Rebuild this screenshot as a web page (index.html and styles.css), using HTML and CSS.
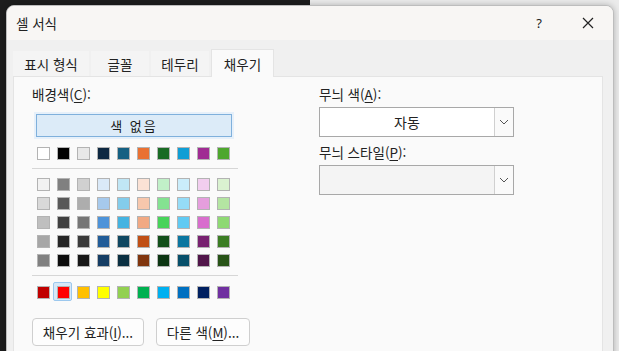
FILE: index.html
```html
<!DOCTYPE html>
<html lang="ko">
<head>
  <meta charset="utf-8"/>
  <title>셀 서식</title>
  <link rel="stylesheet" href="styles.css">
</head>
<body>
  <div class="dialog">
    <div class="titlebar">
      <span class="title">셀 서식</span>
      <span class="title-btns">
        <span class="help">?</span>
        <svg class="close" width="12" height="12" viewBox="0 0 12 12"><path d="M1 1 L11 11 M11 1 L1 11" stroke="#222" stroke-width="1.2" fill="none"/></svg>
      </span>
    </div>
    <div class="dialog-body">
      <div class="tabs">
        <div class="tab t1">표시 형식</div>
        <div class="tab t2">글꼴</div>
        <div class="tab t3">테두리</div>
        <div class="tab active">채우기</div>
      </div>
      <div class="panel">
        <div class="col-left">
          <div class="label">배경색(<u>C</u>):</div>
          <div class="no-color">색 없음</div>
          <div class="swatches" id="base-row"></div>
          <div class="sep"></div>
          <div class="grid" id="theme-grid"></div>
          <div class="sep"></div>
          <div class="swatches" id="std-row"></div>
          <div class="btn-row">
            <div class="btn b1">채우기 효과(<u>I</u>)...</div>
            <div class="btn b2">다른 색(<u>M</u>)...</div>
          </div>
        </div>
        <div class="col-right">
          <div class="label">무늬 색(<u>A</u>):</div>
          <div class="combo">
            <span class="combo-text">자동</span>
            <span class="combo-arrow"><svg width="10" height="6" viewBox="0 0 10 6"><path d="M1 1 L5 5 L9 1" stroke="#555" stroke-width="1" fill="none"/></svg></span>
          </div>
          <div class="label lbl2">무늬 스타일(<u>P</u>):</div>
          <div class="combo empty">
            <span class="combo-text"></span>
            <span class="combo-arrow"><svg width="10" height="6" viewBox="0 0 10 6"><path d="M1 1 L5 5 L9 1" stroke="#555" stroke-width="1" fill="none"/></svg></span>
          </div>
        </div>
      </div>
    </div>
  </div>
<script>
  const base = ["#FFFFFF", "#000000", "#E8E8E8", "#0E2841", "#156082", "#E97132", "#196B24", "#0F9ED5", "#A02B93", "#4EA72E"];
  const theme = [
    ["#F2F2F2", "#808080", "#D0D0D0", "#DAE9F8", "#C0E6F5", "#FBE2D5", "#C1F0C8", "#CAEDFB", "#F2CEEF", "#DAF2D0"],
    ["#D9D9D9", "#595959", "#ADADAD", "#A6C9EC", "#83CCEB", "#F7C7AC", "#84E291", "#95DCF7", "#E59EDD", "#B4E5A2"],
    ["#BFBFBF", "#404040", "#757575", "#4D93D9", "#44B3E1", "#F1A983", "#47D359", "#60CAF3", "#D86DCD", "#8ED973"],
    ["#A6A6A6", "#262626", "#3A3A3A", "#215C98", "#0F4761", "#C04F15", "#124F1A", "#0B76A0", "#782170", "#3B7D23"],
    ["#808080", "#0D0D0D", "#171717", "#153D64", "#0A2F41", "#80350E", "#0C3512", "#074F6A", "#501549", "#275317"]
  ];
  const std = ["#C00000", "#FF0000", "#FFC000", "#FFFF00", "#92D050", "#00B050", "#00B0F0", "#0070C0", "#002060", "#7030A0"];

  function makeSwatch(color, selected) {
    const cell = document.createElement("div");
    cell.className = selected ? "cell selected" : "cell";
    const sw = document.createElement("div");
    sw.className = "swatch";
    sw.style.background = color;
    cell.appendChild(sw);
    return cell;
  }

  base.forEach(c => document.getElementById("base-row").appendChild(makeSwatch(c)));
  theme.forEach(row => {
    row.forEach(c => document.getElementById("theme-grid").appendChild(makeSwatch(c)));
  });
  std.forEach((c, i) => document.getElementById("std-row").appendChild(makeSwatch(c, i === 1)));
</script>
</body>
</html>
```

FILE: styles.css
```css
html, body { margin: 0; padding: 0; height: 100%; overflow: hidden; }
body { background: linear-gradient(to right, #1d1d1d 310px, #ebebeb 310px); font-family: "Noto Sans CJK KR", "Noto Sans", sans-serif; font-size: 13px; color: #1a1a1a; padding: 5px 0 0 6px; box-sizing: border-box; }
u { text-decoration: underline; text-underline-offset: 2px; text-decoration-thickness: 1px; }

.dialog { width: 608px; height: 400px; background: #f0f0f0; border: 1px solid #bdbdbd; border-radius: 8px 8px 0 0; box-sizing: border-box; overflow: hidden; box-shadow: 0 0 6px rgba(0,0,0,0.25); }
.titlebar { height: 34px; background: #f8f6f4; display: flex; align-items: center; justify-content: space-between; padding: 0 19px 0 9px; }
.title { font-size: 13.5px; color: #222; }
.title-btns { display: flex; align-items: center; gap: 40px; }
.help { font-size: 13px; font-family: "Noto Sans", sans-serif; color: #222; }

.dialog-body { padding: 9px 10px 0 6px; }
.tabs { display: flex; align-items: flex-end; height: 27px; gap: 2px; }
.tab { height: 25px; background: #f4f4f4; display: flex; align-items: center; justify-content: center; font-size: 13.5px; color: #222; }
.t1 { width: 76px; }
.t2 { width: 58px; }
.t3 { width: 58px; }
.tab.active { height: 28px; width: 63px; background: #fafafa; border: 1px solid #e4e4e4; border-bottom: none; box-sizing: border-box; margin-bottom: -1px; position: relative; z-index: 1; }

.panel { height: 300px; background: #fafafa; border: 1px solid #e4e4e4; display: flex; padding: 9px 0 0 18px; }
.col-left { width: 206px; flex-shrink: 0; }
.col-right { margin-left: 81px; width: 196px; flex-shrink: 0; }
.label { font-size: 13.5px; height: 17px; line-height: 17px; color: #222; white-space: nowrap; }

.no-color { margin: 11px 0 0 4px; width: 196px; height: 23px; box-sizing: border-box; background: #dcebf8; border: 1px solid #7fb0dc; box-shadow: 0 0 0 2px #e6f0fa; display: flex; align-items: center; justify-content: center; font-size: 13px; letter-spacing: 2px; }

.swatches { display: flex; gap: 7px; margin: 10px 0 0 5px; }
.grid { display: grid; grid-template-columns: repeat(10, 13px); column-gap: 7px; row-gap: 6px; margin: 9px 0 0 5px; }
.cell { width: 13px; height: 13px; position: relative; }
.swatch { width: 13px; height: 13px; box-sizing: border-box; border: 1px solid #b3b3b3; }
.cell.selected::before { content: ""; position: absolute; left: -4px; top: -4px; width: 19px; height: 19px; box-sizing: border-box; border: 1px solid #9cc8ee; background: #d6e8f8; border-radius: 2px; z-index: 0; }
.cell.selected .swatch { position: relative; z-index: 1; }

.sep { height: 1px; background: #d6d6d6; margin: 8px 0 0 0; width: 206px; }
#std-row { margin-top: 10px; }

.btn-row { display: flex; gap: 12px; margin-top: 19px; }
.btn { height: 28px; flex-shrink: 0; background: #fdfdfd; border: 1px solid #cfcfcf; border-radius: 4px; box-sizing: border-box; display: flex; align-items: center; justify-content: center; font-size: 13.5px; color: #222; white-space: nowrap; }
.b1 { width: 112px; }
.b2 { width: 94px; }

.combo { margin-top: 4px; height: 30px; width: 195px; background: #fff; border: 1px solid #a8a8a8; box-sizing: border-box; display: flex; }
.combo.empty { background: #f4f4f4; }
.combo-text { flex: 1; display: flex; align-items: center; justify-content: center; font-size: 14px; color: #222; }
.combo-arrow { width: 18px; border-left: 1px solid #d0d0d0; background: #fafafa; display: flex; align-items: center; justify-content: center; }
.lbl2 { margin-top: 7px; }
```
